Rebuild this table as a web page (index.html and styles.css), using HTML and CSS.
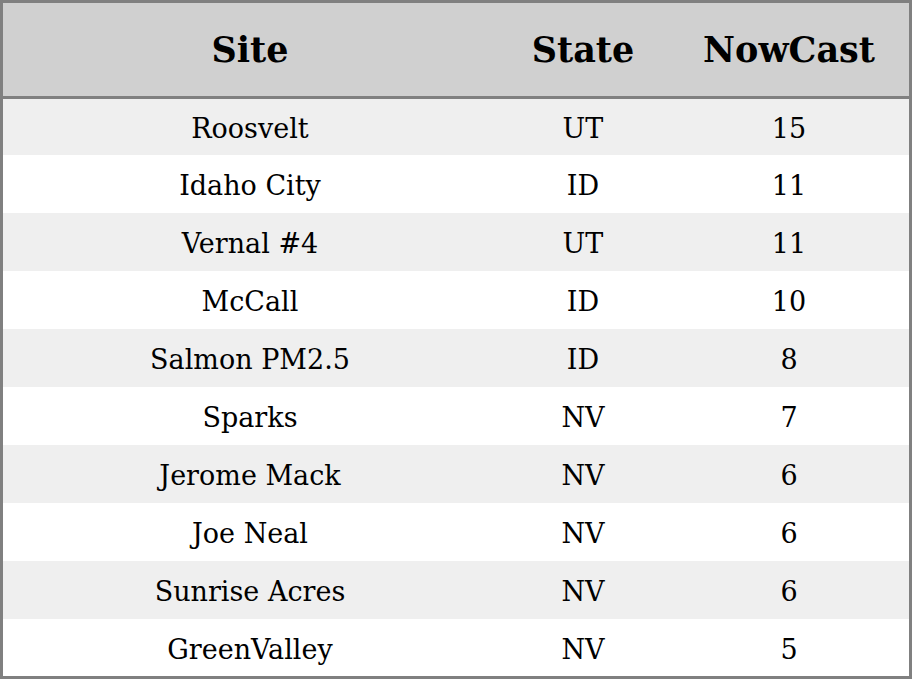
FILE: index.html
```html
<!DOCTYPE html>
<html>
<head>
<meta charset="utf-8">
<link rel="stylesheet" href="styles.css">
</head>
<body>
<table class="grid">
  <colgroup>
    <col class="c-site">
    <col class="c-state">
    <col class="c-now">
  </colgroup>
  <thead>
    <tr class="head"><th>Site</th><th>State</th><th>NowCast</th></tr>
  </thead>
  <tbody>
    <tr class="r1"><td>Roosvelt</td><td>UT</td><td>15</td></tr>
    <tr><td>Idaho City</td><td>ID</td><td>11</td></tr>
    <tr><td>Vernal #4</td><td>UT</td><td>11</td></tr>
    <tr><td>McCall</td><td>ID</td><td>10</td></tr>
    <tr><td>Salmon PM2.5</td><td>ID</td><td>8</td></tr>
    <tr><td>Sparks</td><td>NV</td><td>7</td></tr>
    <tr><td>Jerome Mack</td><td>NV</td><td>6</td></tr>
    <tr><td>Joe Neal</td><td>NV</td><td>6</td></tr>
    <tr><td>Sunrise Acres</td><td>NV</td><td>6</td></tr>
    <tr class="rlast"><td>GreenValley</td><td>NV</td><td>5</td></tr>
  </tbody>
</table>
</body>
</html>
```
FILE: styles.css
```css
html, body {
  margin: 0;
  padding: 0;
  background: #ffffff;
}
.grid {
  width: 912px;
  height: 679px;
  border-collapse: separate;
  border-spacing: 0;
  border: 3px solid #808080;
  box-sizing: border-box;
  table-layout: fixed;
  font-family: "DejaVu Serif", serif;
  color: #000;
}
.c-site { width: 494px; }
.c-state { width: 172px; }
.c-now { width: 240px; }
.head th {
  height: 93px;
  background: #d0d0d0;
  border-bottom: 3px solid #808080;
  font-size: 35px;
  line-height: 40px;
  font-weight: bold;
  text-align: center;
  padding: 0;
}
.grid td {
  height: 58px;
  padding: 3px 0 0 0;
  box-sizing: border-box;
  text-align: center;
  font-size: 27px;
  line-height: 31px;
}
.grid tbody tr:nth-child(odd) td { background: #efefef; }
.grid tbody tr.r1 td { height: 56px; }
.grid tbody tr.rlast td { height: 57px; }
```
